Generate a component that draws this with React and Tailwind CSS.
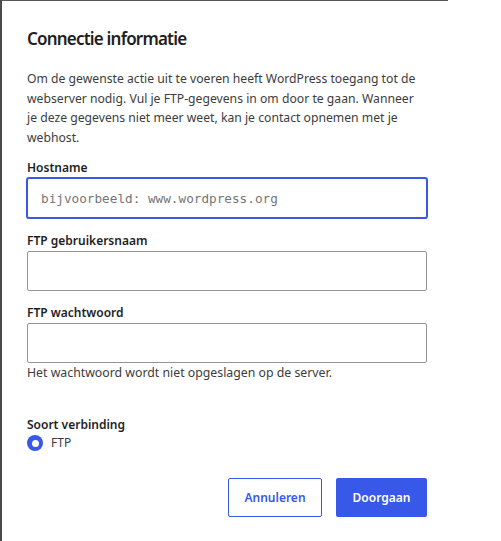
import React from "react";

const font = { fontFamily: '"Noto Sans", "Open Sans", sans-serif' };
const mono = { fontFamily: '"DejaVu Sans Mono", "Liberation Mono", monospace' };

function Field({ label, gap, focused, placeholder, type = "text" }) {
  return (
    <div className={gap}>
      <label className="block text-[12px] leading-[16px] font-semibold text-[#1e1e1e] mb-[2px]">
        {label}
      </label>
      <input
        type={type}
        placeholder={placeholder}
        className={
          "block w-[400px] h-[40px] rounded-[2px] bg-white px-[13px] text-[12.7px] outline-none placeholder:text-[#757575] " +
          (focused
            ? "border border-[#3858e9] shadow-[0_0_0_1px_#3858e9]"
            : "border border-[#949494]")
        }
        style={focused ? mono : undefined}
      />
    </div>
  );
}

export default function App() {
  return (
    <div className="w-[501px] h-[541px] bg-white overflow-hidden" style={font}>
      <div className="w-[448px] h-[541px] border-t border-t-[#555555] border-l-2 border-l-[#4a4a4a]">
        <div className="pl-[25px] flex flex-col">
          <h1 className="mt-[26px] text-[17px] leading-[24px] font-semibold tracking-[-0.8px] text-[#1e1e1e]">
            Connectie informatie
          </h1>
          <p className="mt-[18px] w-[420px] whitespace-nowrap text-[12.2px] leading-[19.5px] text-[#3c3c3c]">
            Om de gewenste actie uit te voeren heeft WordPress toegang tot de
            <br />
            webserver nodig. Vul je FTP-gegevens in om door te gaan. Wanneer
            <br />
            je deze gegevens niet meer weet, kan je contact opnemen met je
            <br />
            webhost.
          </p>

          <Field label="Hostname" gap="mt-[13px]" focused placeholder="bijvoorbeeld: www.wordpress.org" />
          <Field label="FTP gebruikersnaam" gap="mt-[15px]" />
          <Field label="FTP wachtwoord" gap="mt-[14px]" type="password" />
          <p className="mt-[1px] text-[12.3px] leading-[18px] text-[#3c3c3c]">
            Het wachtwoord wordt niet opgeslagen op de server.
          </p>

          <div className="mt-[34px]">
            <div className="text-[12px] leading-[18px] font-semibold text-[#1e1e1e]">
              Soort verbinding
            </div>
            <label className="flex items-center h-[18px] gap-[8px]">
              <span className="w-[16px] h-[16px] rounded-full bg-[#3858e9] flex items-center justify-center">
                <span className="w-[7px] h-[7px] rounded-full bg-white" />
              </span>
              <span className="text-[12px] text-[#3c3c3c]">FTP</span>
            </label>
          </div>

          <div className="mt-[26px] w-[400px] flex justify-end gap-[14px]">
            <button className="w-[94px] h-[39px] rounded-[2px] border border-[#3858e9] bg-white text-[#3858e9] text-[12px] font-semibold">
              Annuleren
            </button>
            <button className="w-[91px] h-[39px] rounded-[2px] bg-[#3858e9] text-white text-[12px] font-semibold">
              Doorgaan
            </button>
          </div>
        </div>
      </div>
    </div>
  );
}
